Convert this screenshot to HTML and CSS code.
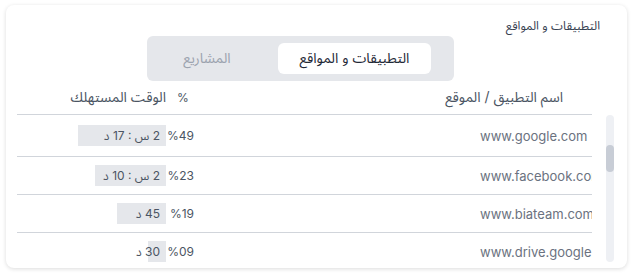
FILE: index.html
```html
<html>
<head>
<meta charset="utf-8">
<title>التطبيقات و المواقع</title>
<link rel="stylesheet" href="styles.css">
</head>
<body>
<div class="card">
  <div class="title">التطبيقات و المواقع</div>

  <div class="tabs">
    <div class="tab active">التطبيقات و المواقع</div>
    <div class="tab">المشاريع</div>
  </div>

  <div class="head">
    <div class="col-name">اسم التطبيق / الموقع</div>
    <div class="col-gap"></div>
    <div class="col-pct">%</div>
    <div class="col-time">الوقت المستهلك</div>
  </div>

  <div class="body">
    <div class="track"><div class="thumb"></div></div>
    <div class="rows">
      <div class="row first">
        <div class="col-name url">www.google.com</div>
        <div class="col-gap"></div>
        <div class="col-pct"><bdo dir="ltr">%49</bdo></div>
        <div class="col-time"><span class="bar" style="width: 88px"><bdo dir="ltr">د 17 : س 2</bdo></span></div>
      </div>
      <div class="row">
        <div class="col-name url">www.facebook.com</div>
        <div class="col-gap"></div>
        <div class="col-pct"><bdo dir="ltr">%23</bdo></div>
        <div class="col-time"><span class="bar" style="width: 71px"><bdo dir="ltr">د 10 : س 2</bdo></span></div>
      </div>
      <div class="row">
        <div class="col-name url">www.biateam.com</div>
        <div class="col-gap"></div>
        <div class="col-pct"><bdo dir="ltr">%19</bdo></div>
        <div class="col-time"><span class="bar" style="width: 49px"><bdo dir="ltr">د 45</bdo></span></div>
      </div>
      <div class="row">
        <div class="col-name url">www.drive.google.com</div>
        <div class="col-gap"></div>
        <div class="col-pct"><bdo dir="ltr">%09</bdo></div>
        <div class="col-time"><span class="bar" style="width: 18px"><bdo dir="ltr">د 30</bdo></span></div>
      </div>
    </div>
  </div>
</div>
</body>
</html>
```

FILE: styles.css
```css
body {
  margin: 0;
  padding: 5px 7px 0 6px;
  background: #fff;
  font-family: Inter, "Noto Sans Arabic", "Noto Naskh Arabic", "DejaVu Sans", sans-serif;
}

.card {
  width: 621px;
  height: 263px;
  box-sizing: border-box;
  padding: 14px 12px 0 11px;
  background: #fff;
  border-radius: 8px;
  box-shadow: 0 1px 4px rgba(0, 0, 0, 0.14);
  direction: rtl;
  overflow: hidden;
}

.title {
  margin-right: 15px;
  font-size: 12px;
  line-height: 14px;
  color: #374151;
}

/* segmented switch */
.tabs {
  display: flex;
  width: 307px;
  height: 45px;
  box-sizing: border-box;
  margin: 3px 161px 0 0;
  padding: 7px 23px 7px 7px;
  background: #e5e7eb;
  border-radius: 6px;
}
.tab {
  flex: 1;
  display: flex;
  align-items: center;
  justify-content: center;
  padding-right: 18px;
  font-size: 14px;
  color: #9ca3af;
}
.tab.active {
  flex: none;
  width: 153px;
  padding: 0;
  background: #fff;
  border-radius: 6px;
  color: #1f2937;
}

/* table */
.head, .row {
  display: flex;
  align-items: center;
  width: 575px;
  border-bottom: 1px solid #d1d5db;
  font-size: 13px;
}
.head {
  height: 33px;
  margin-right: 23px;
  font-size: 14px;
  color: #4b5563;
}
.row {
  height: 37px;
  color: #4b5563;
}
.row.first { height: 41px; }

.col-name {
  width: 160px;
  box-sizing: border-box;
  padding-right: 29px;
  white-space: nowrap;
  overflow: hidden;
}
.col-name.url {
  direction: ltr;
  text-align: left;
  padding: 0 0 0 48px;
  color: #6b7280;
}
.col-gap { flex: 1; }
.col-pct {
  width: 34px;
  text-align: center;
  font-size: 12px;
}
.row .col-pct {
  box-sizing: border-box;
  padding-right: 6px;
  text-align: right;
}
.col-time {
  width: 149px;
  white-space: nowrap;
}
.bar {
  display: inline-block;
  height: 21px;
  line-height: 21px;
  box-sizing: border-box;
  padding-right: 6px;
  background: #e5e7eb;
  font-size: 12px;
}

.body {
  display: flex;
  align-items: flex-start;
}
.track {
  flex: none;
  width: 8px;
  height: 147px;
  margin: 0 1px 0 14px;
  background: #eef0f4;
  border-radius: 4px;
}
.thumb {
  height: 27px;
  margin-top: 30px;
  background: #c8cdd6;
  border-radius: 4px;
}
```
